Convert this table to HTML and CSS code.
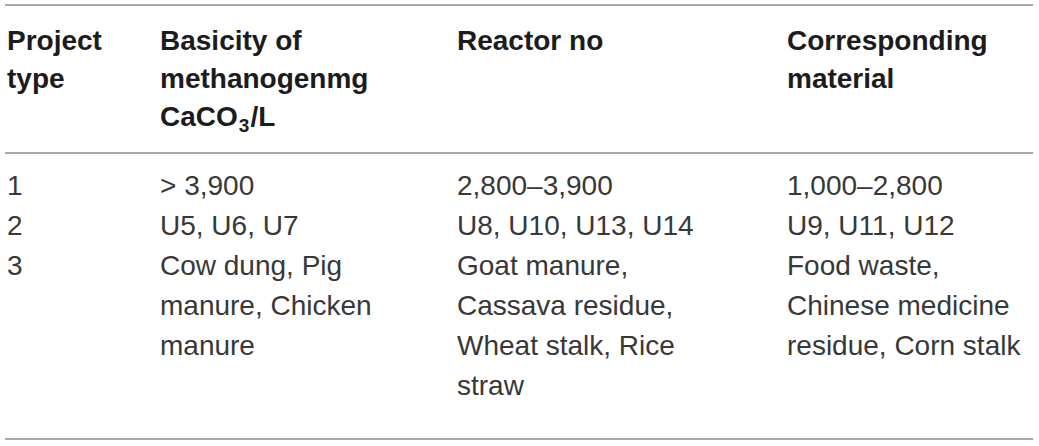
FILE: index.html
```html
<!DOCTYPE html>
<html lang="en">
<head>
<meta charset="utf-8">
<title>Project types</title>
<link rel="stylesheet" href="styles.css">
</head>
<body>
<table class="data-table">
  <colgroup>
    <col class="c1">
    <col class="c2">
    <col class="c3">
    <col class="c4">
  </colgroup>
  <thead>
    <tr>
      <th class="cell-1">Project type</th>
      <th class="cell-2">Basicity of methanogenmg CaCO<sub class="sub">3</sub>/L</th>
      <th class="cell-3">Reactor no</th>
      <th class="cell-4">Corresponding material</th>
    </tr>
  </thead>
  <tbody>
    <tr class="row-first">
      <td class="cell-1">1</td>
      <td class="cell-2">&gt; 3,900</td>
      <td class="cell-3">2,800–3,900</td>
      <td class="cell-4">1,000–2,800</td>
    </tr>
    <tr>
      <td class="cell-1">2</td>
      <td class="cell-2">U5, U6, U7</td>
      <td class="cell-3">U8, U10, U13, U14</td>
      <td class="cell-4">U9, U11, U12</td>
    </tr>
    <tr class="row-last">
      <td class="cell-1">3</td>
      <td class="cell-2">Cow dung, Pig manure, Chicken manure</td>
      <td class="cell-3">Goat manure, Cassava residue, Wheat stalk, Rice straw</td>
      <td class="cell-4">Food waste, Chinese medicine residue, Corn stalk</td>
    </tr>
  </tbody>
</table>
</body>
</html>
```
FILE: styles.css
```css
html, body {
  margin: 0;
  padding: 0;
  background: #ffffff;
}

body {
  padding: 4px 0 0 5px;
  font-family: "Liberation Sans", Arial, sans-serif;
}

.data-table {
  border-collapse: collapse;
  table-layout: fixed;
  width: 1028px;
  border-top: 2px solid #a8a8a8;
  border-bottom: 2px solid #a8a8a8;
}

.c1 { width: 153px; }
.c2 { width: 297px; }
.c3 { width: 330px; }
.c4 { width: 248px; }

.data-table th,
.data-table td {
  text-align: left;
  vertical-align: top;
  padding: 0 0 0 2px;
}

.data-table th {
  font-size: 28px;
  font-weight: 700;
  line-height: 38px;
  color: #1c1c1c;
  padding-top: 16px;
  padding-bottom: 16px;
  border-bottom: 2px solid #a8a8a8;
}

.data-table td {
  font-size: 28px;
  font-weight: 400;
  line-height: 40px;
  color: #383838;
}

.data-table .cell-1 { padding-right: 20px; }
.data-table .cell-2 { padding-right: 35px; }
.data-table .cell-3 { padding-right: 68px; }
.data-table .cell-4 { padding-right: 0; }

.row-first td { padding-top: 12px; }
.row-last td { padding-bottom: 32px; }

.sub {
  display: inline-block;
  font-size: 19px;
  line-height: 14px;
  vertical-align: -6px;
  margin: 0 1px;
}
```
